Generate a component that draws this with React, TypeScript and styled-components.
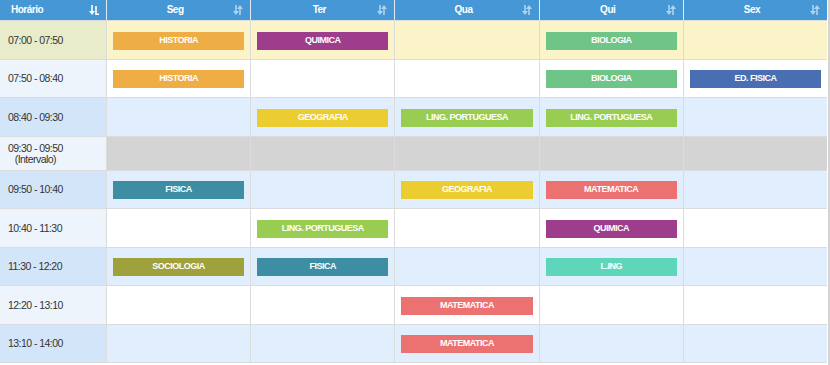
import React from "react";
import styled, { createGlobalStyle } from "styled-components";

const GlobalStyle = createGlobalStyle`
  html, body {
    margin: 0;
    padding: 0;
    background: #ffffff;
  }
  body {
    font-family: "Liberation Sans", Arial, sans-serif;
  }
`;

const StyledPage = styled.div`
  width: 830px;
  height: 365px;
  box-sizing: border-box;
  border-right: 2px solid #d4d4d4;
  padding-right: 1px;
  overflow: hidden;
`;

const StyledTable = styled.div`
  display: flex;
  flex-direction: column;
  gap: 1px;
  background: #dcdcdc;
  border-bottom: 1px solid #dcdcdc;
`;

const StyledRow = styled.div<{ $height: number }>`
  display: grid;
  grid-template-columns: 106px repeat(5, minmax(0, 1fr));
  gap: 1px;
  height: ${(p) => p.$height}px;
`;

const StyledHeaderRow = styled(StyledRow)`
  background: #e3ecf4;
`;

const StyledHeaderCell = styled.div<{ $left?: boolean }>`
  background: #4598d5;
  color: #ffffff;
  font-size: 10px;
  font-weight: bold;
  letter-spacing: -0.5px;
  display: grid;
  grid-template-columns: ${(p) => (p.$left ? "1fr auto" : "16px 1fr 16px")};
  align-items: center;
  text-align: ${(p) => (p.$left ? "left" : "center")};
  padding: 0 7px 2px ${(p) => (p.$left ? "11px" : "0")};
`;

const StyledHeaderLabel = styled.span<{ $center?: boolean }>`
  grid-column: ${(p) => (p.$center ? "2" : "1")};
`;

const StyledSortIcon = styled.svg`
  width: 10px;
  height: 10px;
  justify-self: end;
  margin-top: 1px;
  display: block;
`;

type Tone = "yellow" | "white" | "blue" | "break";

const timeBg: Record<Tone, string> = {
  yellow: "#e8ecca",
  white: "#edf4fb",
  blue: "#d3e6f9",
  break: "#edf4fb",
};

const cellBg: Record<Tone, string> = {
  yellow: "#faf4c8",
  white: "#ffffff",
  blue: "#e0eefd",
  break: "#d4d4d4",
};

const StyledTimeCell = styled.div<{ $tone: Tone }>`
  background: ${(p) => timeBg[p.$tone]};
  color: #333333;
  font-size: 10.5px;
  letter-spacing: -0.55px;
  display: flex;
  align-items: center;
  padding-left: 8px;
`;

const StyledTimeText = styled.span`
  display: inline-block;
  text-align: center;
  line-height: 11px;
`;

const StyledCell = styled.div<{ $tone: Tone }>`
  background: ${(p) => cellBg[p.$tone]};
  display: flex;
  align-items: center;
  padding: 0 6px;
`;

const StyledBadge = styled.div<{ $color: string }>`
  width: 100%;
  height: 18px;
  line-height: 17px;
  background: ${(p) => p.$color};
  color: #ffffff;
  font-size: 9px;
  font-weight: bold;
  letter-spacing: -0.5px;
  text-align: center;
  margin-top: 1px;
`;

const colors: Record<string, string> = {
  HISTORIA: "#eead45",
  QUIMICA: "#9e3d8b",
  BIOLOGIA: "#6fc488",
  "ED. FISICA": "#496eb1",
  GEOGRAFIA: "#ebcd32",
  "LING. PORTUGUESA": "#98cd51",
  FISICA: "#3d8ea2",
  MATEMATICA: "#eb7270",
  SOCIOLOGIA: "#9ea13c",
  "L.ING": "#5dd6b9",
};

type Slot = {
  time: string;
  note?: string;
  tone: Tone;
  height: number;
  classes: (string | null)[];
};

const slots: Slot[] = [
  { time: "07:00 - 07:50", tone: "yellow", height: 38, classes: ["HISTORIA", "QUIMICA", null, "BIOLOGIA", null] },
  { time: "07:50 - 08:40", tone: "white", height: 37, classes: ["HISTORIA", null, null, "BIOLOGIA", "ED. FISICA"] },
  { time: "08:40 - 09:30", tone: "blue", height: 38, classes: [null, "GEOGRAFIA", "LING. PORTUGUESA", "LING. PORTUGUESA", null] },
  { time: "09:30 - 09:50", note: "(Intervalo)", tone: "break", height: 33, classes: [null, null, null, null, null] },
  { time: "09:50 - 10:40", tone: "blue", height: 37, classes: ["FISICA", null, "GEOGRAFIA", "MATEMATICA", null] },
  { time: "10:40 - 11:30", tone: "white", height: 38, classes: [null, "LING. PORTUGUESA", null, "QUIMICA", null] },
  { time: "11:30 - 12:20", tone: "blue", height: 37, classes: ["SOCIOLOGIA", "FISICA", null, "L.ING", null] },
  { time: "12:20 - 13:10", tone: "white", height: 38, classes: [null, null, "MATEMATICA", null, null] },
  { time: "13:10 - 14:00", tone: "blue", height: 37, classes: [null, null, "MATEMATICA", null, null] },
];

const days = ["Seg", "Ter", "Qua", "Qui", "Sex"];

const SortIcon: React.FC<{ active?: boolean }> = ({ active }) => {
  const c = active ? "#ffffff" : "#b0d3f0";
  return (
    <StyledSortIcon viewBox="0 0 10 10" aria-hidden="true">
      <path d="M2.2 0h1.6v6H6L3 10 0 6h2.2z" fill={c} />
      {active ? (
        <path d="M6.2 1h1.6v7.4H10V10H6.2z" fill={c} />
      ) : (
        <path d="M6.2 10h1.6V4H10L7 0 4 4h2.2z" fill={c} />
      )}
    </StyledSortIcon>
  );
};

const App: React.FC = () => {
  return (
    <>
      <GlobalStyle />
      <StyledPage>
        <StyledTable>
          <StyledHeaderRow $height={20}>
            <StyledHeaderCell $left>
              <StyledHeaderLabel>Horário</StyledHeaderLabel>
              <SortIcon active />
            </StyledHeaderCell>
            {days.map((d) => (
              <StyledHeaderCell key={d}>
                <StyledHeaderLabel $center>{d}</StyledHeaderLabel>
                <SortIcon />
              </StyledHeaderCell>
            ))}
          </StyledHeaderRow>
          {slots.map((s) => (
            <StyledRow key={s.time} $height={s.height}>
              <StyledTimeCell $tone={s.tone}>
                <StyledTimeText>
                  {s.time}
                  {s.note && (
                    <>
                      <br />
                      {s.note}
                    </>
                  )}
                </StyledTimeText>
              </StyledTimeCell>
              {s.classes.map((c, i) => (
                <StyledCell key={i} $tone={s.tone}>
                  {c && <StyledBadge $color={colors[c]}>{c}</StyledBadge>}
                </StyledCell>
              ))}
            </StyledRow>
          ))}
        </StyledTable>
      </StyledPage>
    </>
  );
};

export default App;
